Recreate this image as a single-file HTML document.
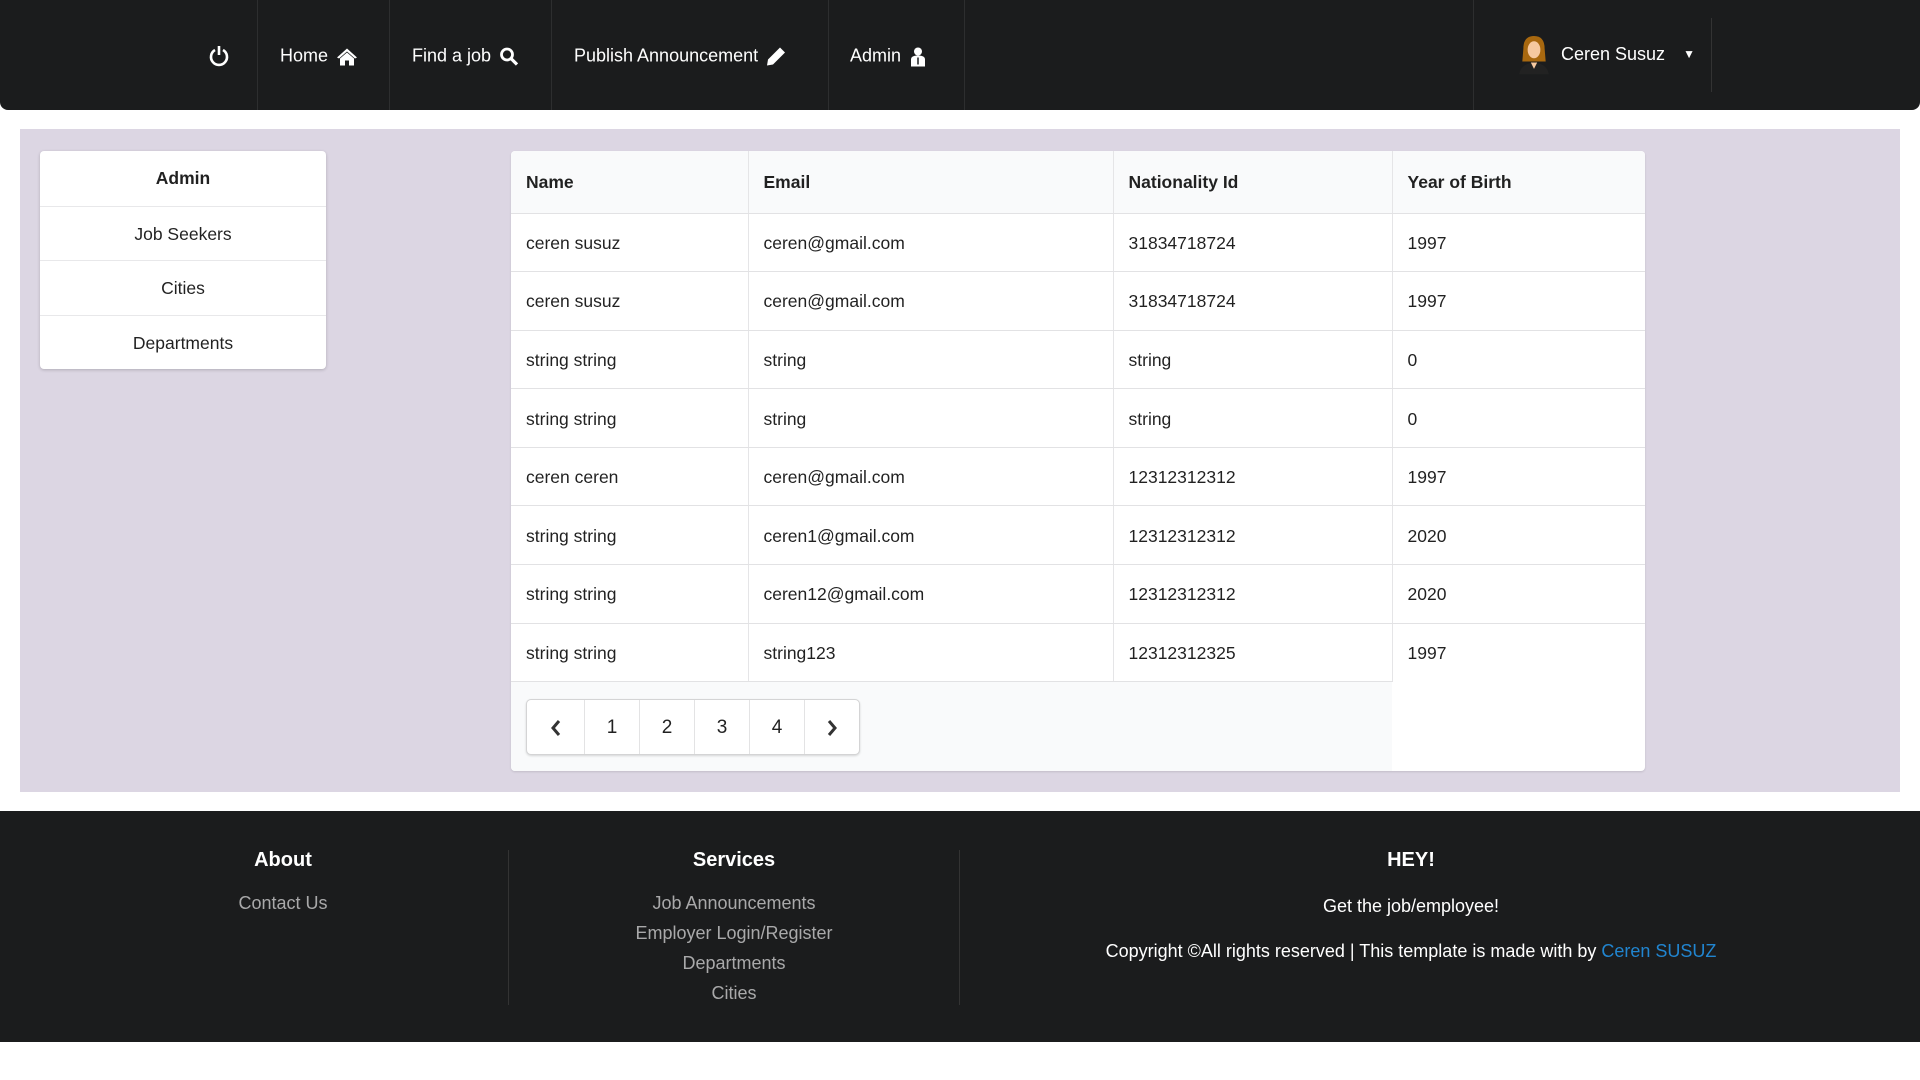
<!DOCTYPE html>
<html><head><meta charset="utf-8"><style>
*{box-sizing:border-box;margin:0;padding:0}
body{width:1920px;height:1080px;background:#fff;font-family:"Liberation Sans",sans-serif;font-size:17.5px;color:rgba(0,0,0,.87);position:relative;overflow:hidden}
.nav{position:absolute;left:0;top:0;width:1920px;height:110px;background:#1b1c1d;border-radius:0 0 8px 8px}
.sep{position:absolute;top:0;width:1px;height:110px;background:#2d2e2f}
.ni{position:absolute;top:56px;transform:translateY(-50%);color:#fff;font-size:18px;display:flex;align-items:center;gap:8px}
.main{position:absolute;left:20px;top:129px;width:1880px;height:663px;background:#dcd6e3}
.side{position:absolute;left:40px;top:151px;width:286px;height:218px;background:#fff;border-radius:4px;box-shadow:0 1px 3px rgba(0,0,0,.2)}
.side div{height:54.5px;line-height:54.5px;text-align:center;border-top:1px solid #e8e8ea;font-size:17.5px}
.side div:first-child{border-top:none;font-weight:bold}
.tbl{position:absolute;left:511px;top:151px;width:1134px;height:620px;background:#fff;border-radius:4px;box-shadow:0 1px 2px rgba(0,0,0,.12);overflow:hidden}
table{border-collapse:collapse;width:1134px;table-layout:fixed}
th{background:#f9fafb;height:62px;text-align:left;padding-left:15px;padding-top:2px;font-weight:bold;font-size:17.5px;border-left:1px solid #e5e5e7;border-bottom:1px solid #e2e2e4}
td{height:58.6px;padding-left:15px;padding-top:2px;border-left:1px solid #e5e5e7;border-bottom:1px solid #e2e2e4;font-size:17.5px}
th:first-child,td:first-child{border-left:none}
.foot{position:absolute;left:0;top:811px;width:1920px;height:231px;background:#1b1c1d;color:#fff}
.fh{position:absolute;font-weight:bold;font-size:20px;transform:translateX(-50%);white-space:nowrap}
.fl{position:absolute;color:#a9a9aa;font-size:18px;transform:translateX(-50%);white-space:nowrap}
.pg{position:absolute;left:15px;top:548px;width:334px;height:56px;border:1px solid #d4d4d5;border-radius:5px;background:#fff;display:flex;box-shadow:0 1px 2px rgba(0,0,0,.15)}
.pg div{width:55px;border-left:1px solid #e3e3e4;display:flex;align-items:center;justify-content:center;font-size:19px;padding-top:2px}
.pg div:first-child{border-left:none;width:57px}
</style></head><body>
<div class="nav">
 <div class="sep" style="left:257px"></div><div class="sep" style="left:389px"></div><div class="sep" style="left:551px"></div><div class="sep" style="left:828px"></div><div class="sep" style="left:964px"></div><div class="sep" style="left:1473px"></div>
 <div style="position:absolute;left:1711px;top:18px;width:1px;height:74px;background:#333"></div>
 <div class="ni" style="left:209px"><svg width="20" height="22" viewBox="0 0 20 22"><path d="M6 5 A8 8 0 1 0 14 5" fill="none" stroke="#fff" stroke-width="2.6"/><path d="M10 1v9" stroke="#fff" stroke-width="2.6"/></svg></div>
 <div class="ni" style="left:280px">Home <svg width="22" height="18" viewBox="0 0 22 18"><path d="M11 1 L1 10 L3 11 L11 4 L19 11 L21 10 Z M4 11 V18 H9 V13 H13 V18 H18 V11 L11 5 Z" fill="#fff"/></svg></div>
 <div class="ni" style="left:412px">Find a job <svg width="20" height="20" viewBox="0 0 20 20"><circle cx="8" cy="8" r="5.5" fill="none" stroke="#fff" stroke-width="2.8"/><path d="M12 12 L18 18" stroke="#fff" stroke-width="3.2"/></svg></div>
 <div class="ni" style="left:574px">Publish Announcement <svg width="20" height="20" viewBox="0 0 20 20"><path d="M14 1 L19 6 L7 18 L1 19 L2 13 Z" fill="#fff"/></svg></div>
 <div class="ni" style="left:850px">Admin <svg width="18" height="20" viewBox="0 0 18 20"><circle cx="9" cy="5" r="4" fill="#fff"/><path d="M2 20 V13 Q2 9 9 9 Q16 9 16 13 V20 Z" fill="#fff"/><path d="M9 11 v7" stroke="#1b1c1d" stroke-width="1.5"/></svg></div>
 <div class="ni" style="left:1517px;gap:10px;top:54px">
  <svg width="34" height="42" viewBox="0 0 32 38"><path d="M6 14 Q6 2 16 2 Q26 2 26 14 L27 26 L5 26 Z" fill="#a8680f"/><ellipse cx="16" cy="15" rx="6" ry="8" fill="#f6c9a0"/><path d="M2 38 Q4 28 16 27 Q28 28 30 38 Z" fill="#222"/><path d="M13 27 L16 33 L19 27 Z" fill="#f6c9a0"/></svg>
  <span>Ceren Susuz</span><span style="font-size:12px;margin-left:8px">▼</span></div>
</div>
<div class="main"></div>
<div class="side"><div>Admin</div><div>Job Seekers</div><div>Cities</div><div>Departments</div></div>
<div class="tbl">
<div style="position:absolute;left:0;top:530px;width:881px;height:90px;background:#f9fafb"></div>
<table style="position:relative">
<colgroup><col style="width:237px"><col style="width:365px"><col style="width:279px"><col style="width:253px"></colgroup>
<tr><th>Name</th><th>Email</th><th>Nationality Id</th><th>Year of Birth</th></tr>
<tr><td>ceren susuz</td><td>ceren@gmail.com</td><td>31834718724</td><td>1997</td></tr>
<tr><td>ceren susuz</td><td>ceren@gmail.com</td><td>31834718724</td><td>1997</td></tr>
<tr><td>string string</td><td>string</td><td>string</td><td>0</td></tr>
<tr><td>string string</td><td>string</td><td>string</td><td>0</td></tr>
<tr><td>ceren ceren</td><td>ceren@gmail.com</td><td>12312312312</td><td>1997</td></tr>
<tr><td>string string</td><td>ceren1@gmail.com</td><td>12312312312</td><td>2020</td></tr>
<tr><td>string string</td><td>ceren12@gmail.com</td><td>12312312312</td><td>2020</td></tr>
<tr><td>string string</td><td>string123</td><td>12312312325</td><td style="border-bottom:none">1997</td></tr>
</table>
<div class="pg"><div><svg width="12" height="18" viewBox="0 0 12 18"><path d="M9 2 L3 9 L9 16" fill="none" stroke="#333" stroke-width="3"/></svg></div><div>1</div><div>2</div><div>3</div><div>4</div><div><svg width="12" height="18" viewBox="0 0 12 18"><path d="M3 2 L9 9 L3 16" fill="none" stroke="#333" stroke-width="3"/></svg></div></div>
</div>
<div class="foot">
 <div style="position:absolute;left:508px;top:39px;width:1px;height:155px;background:#333"></div>
 <div style="position:absolute;left:959px;top:39px;width:1px;height:155px;background:#333"></div>
 <div class="fh" style="left:283px;top:38px">About</div>
 <div class="fl" style="left:283px;top:82px">Contact Us</div>
 <div class="fh" style="left:734px;top:38px">Services</div>
 <div class="fl" style="left:734px;top:82px">Job Announcements</div>
 <div class="fl" style="left:734px;top:112px">Employer Login/Register</div>
 <div class="fl" style="left:734px;top:142px">Departments</div>
 <div class="fl" style="left:734px;top:172px">Cities</div>
 <div class="fh" style="left:1411px;top:38px">HEY!</div>
 <div class="fl" style="left:1411px;top:85px;color:#fff">Get the job/employee!</div>
 <div class="fl" style="left:1411px;top:130px;color:#fff">Copyright ©All rights reserved | This template is made with by <span style="color:#2185d0">Ceren SUSUZ</span></div>
</div>
</body></html>
